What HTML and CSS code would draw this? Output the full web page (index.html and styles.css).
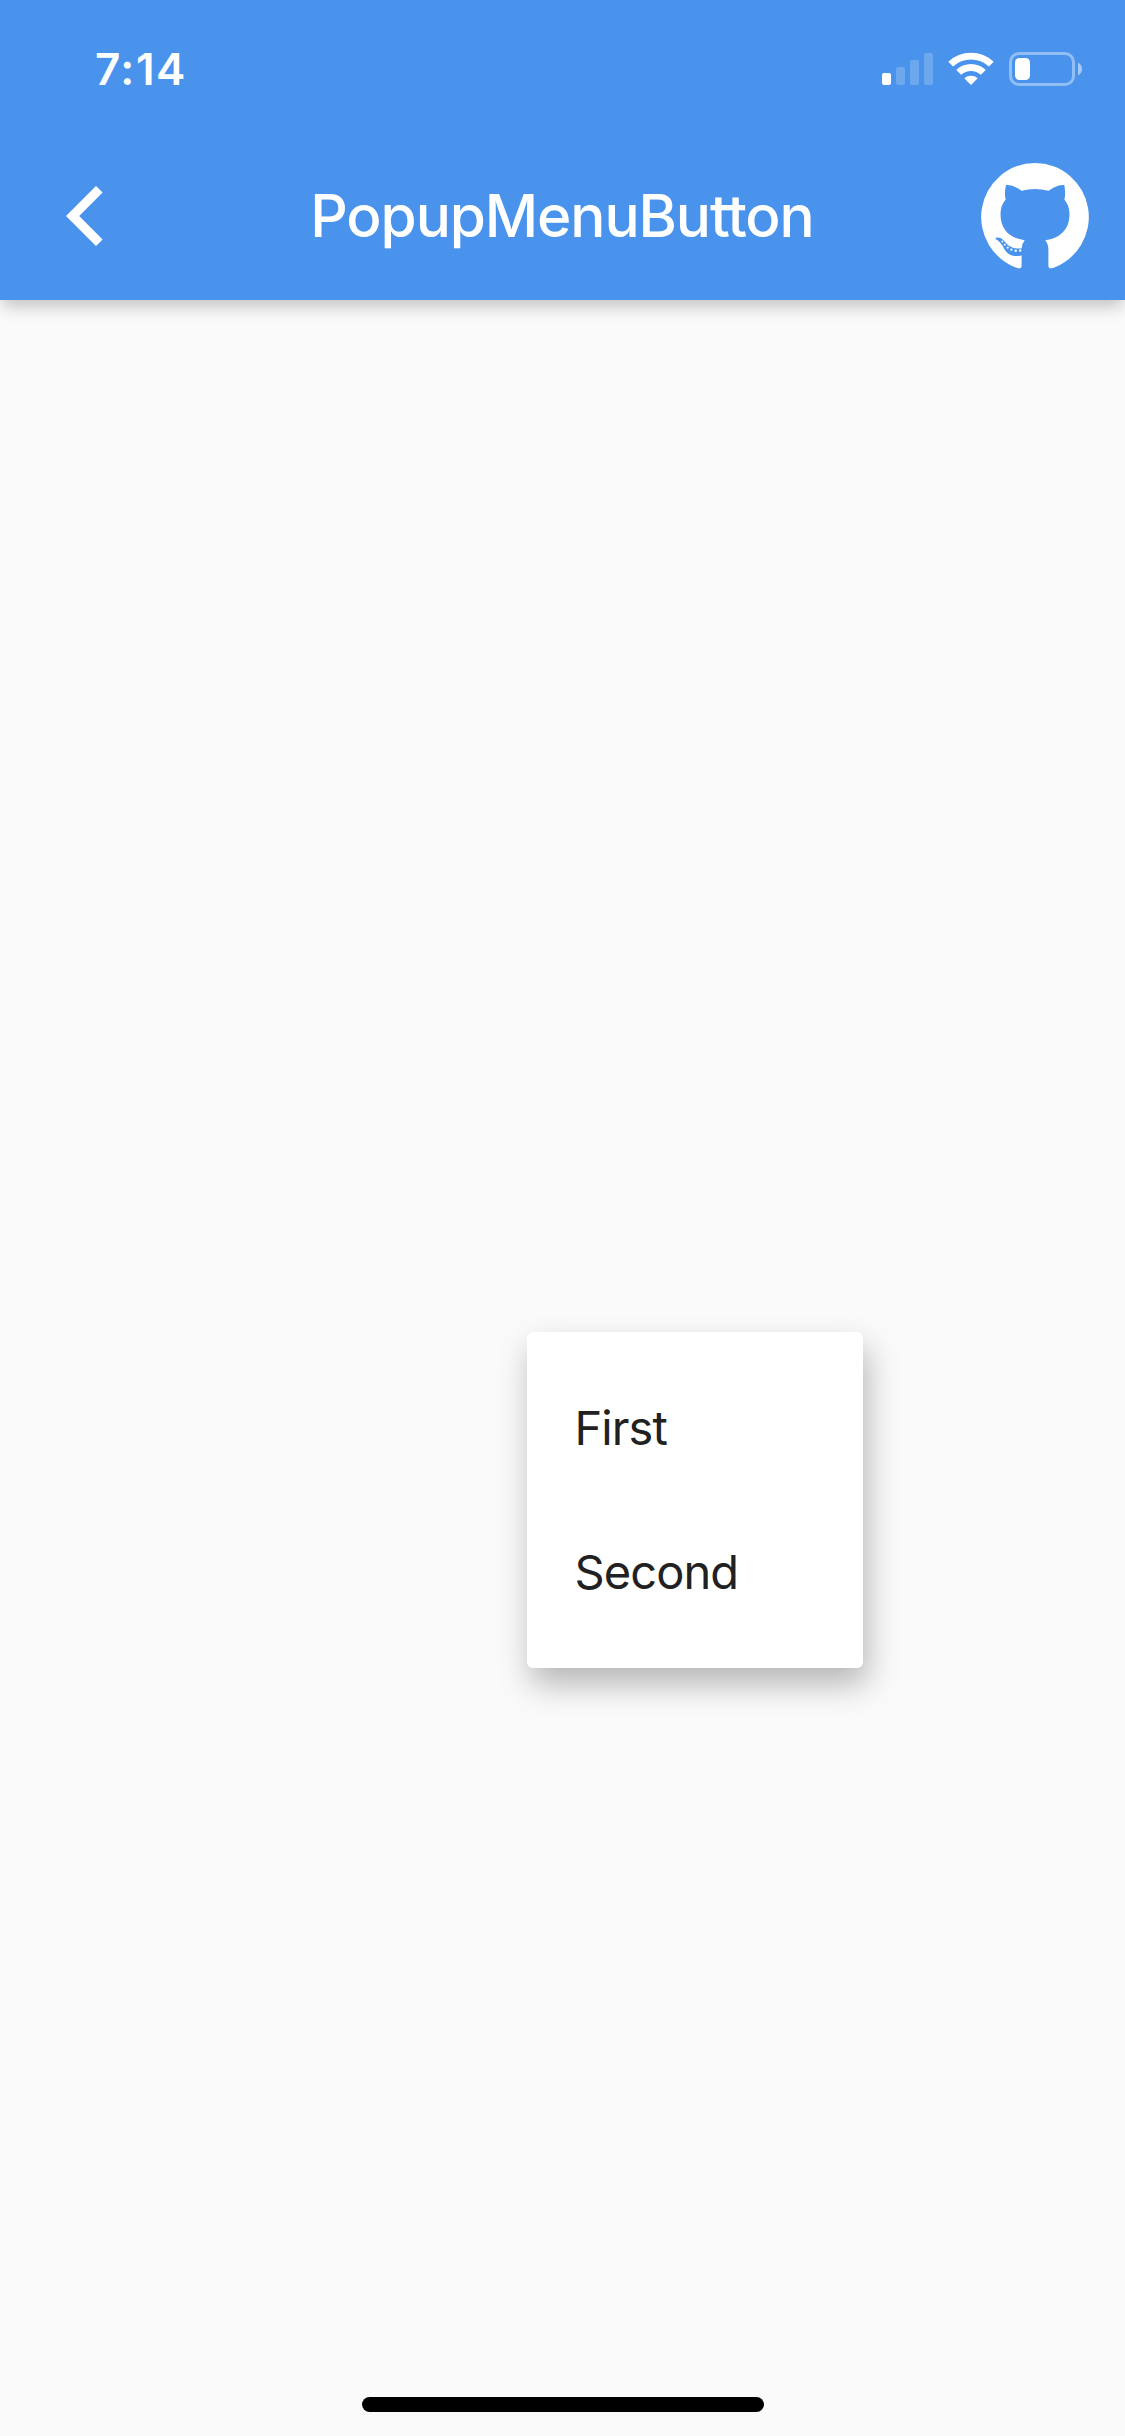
FILE: index.html
```html
<!DOCTYPE html>
<html lang="en">
<head>
<meta charset="utf-8">
<title>PopupMenuButton</title>
<link rel="stylesheet" href="styles.css">
</head>
<body>
<div class="screen">
  <header class="app-bar">
    <div class="status-bar">
      <span class="clock">7:14</span>
      <svg class="status-icons" width="204" height="36" viewBox="880 51 204 36" fill="#fff">
        <rect x="882" y="73" width="9" height="12" rx="2"/>
        <g opacity=".2">
          <rect x="896" y="67" width="9" height="18" rx="2"/>
          <rect x="910" y="60" width="9" height="25" rx="2"/>
          <rect x="924" y="53" width="9" height="32" rx="2"/>
        </g>
        <path d="M948.3 61.7a33 33 0 0 1 45.4 0l-4.7 4.8a26.3 26.3 0 0 0-36 0z"/>
        <path d="M956.3 69.9a21.4 21.4 0 0 1 29.4 0l-4.8 4.8a14.8 14.8 0 0 0-19.8 0z"/>
        <path d="M964.3 78.2a10.3 10.3 0 0 1 13.4 0L971 85z"/>
        <rect x="1010.5" y="53.5" width="63" height="31" rx="8.5" fill="none" stroke="#fff" stroke-width="3" opacity=".4"/>
        <rect x="1015" y="58" width="15" height="22" rx="4.5"/>
        <path d="M1078 62.5q4 2.4 4 6.5t-4 6.5z" opacity=".5"/>
      </svg>
    </div>
    <div class="toolbar">
      <svg class="back" width="37" height="60" viewBox="66 186 37 60" fill="#fff">
        <path d="M96 186l6.6 6.5L79.2 216l23.4 23.5L96 246 66 216z"/>
      </svg>
      <h1 class="title">PopupMenuButton</h1>
      <svg class="github" width="108" height="106" viewBox="981 163 108 106" fill="#fff">
        <path d="M1035 163A54 54 0 0 1 1052 268.200Q1048.400 269 1048.400 265.500V250Q1048.400 244 1045.300 240.300C1060 238 1069.500 230 1069.500 214C1069.500 208 1067.500 203 1064.300 199.500Q1066 194 1064.300 185Q1057 184.500 1048.700 190.700Q1035 187.300 1021.500 190.700Q1013 184.500 1006 185Q1004 194 1005.700 199.500C1002.500 203 1000.500 208 1000.500 214C1000.500 230 1010 238 1024.700 240.300Q1022.200 243 1021.700 248.300Q1013.500 249.300 1008.500 245.500Q1006 243.500 1003.800 240.500Q1000.500 236.500 996 237.700Q994.500 238.800 997.500 240.300Q1000.500 242 1004 248.500C1008 255.500 1013 257 1021.600 255.500V265.500Q1021.600 269 1018 268.200A54 54 0 0 1 1035 163Z"/>
        <circle cx="1002.300" cy="241.500" r=".9"/>
        <circle cx="1004.700" cy="244.700" r="1"/>
        <circle cx="1007.700" cy="247.600" r="1.100"/>
        <circle cx="1011.400" cy="249.700" r="1.100"/>
        <circle cx="1015.700" cy="250.800" r="1.200"/>
        <circle cx="1020.200" cy="250.500" r="1.200"/>
      </svg>
    </div>
  </header>
  <main class="content">
    <ul class="menu">
      <li class="menu-item">First</li>
      <li class="menu-item">Second</li>
    </ul>
  </main>
  <div class="home-indicator"></div>
</div>
</body>
</html>
```
FILE: styles.css
```css
* { box-sizing: border-box; }
body { margin: 0; font-family: Inter, "Liberation Sans", sans-serif; }
.screen {
  display: flex; flex-direction: column; align-items: center;
  width: 1125px; height: 2436px; background: #fafafa; overflow: hidden;
}
.app-bar {
  width: 100%; height: 300px; background: #4993ec; color: #fff;
  box-shadow: 0 8px 16px -2px rgba(0, 0, 0, .23);
}
.status-bar {
  display: flex; justify-content: space-between; align-items: center;
  height: 132px; padding: 6px 41px 0 95px;
}
.clock { font-size: 44px; font-weight: 600; line-height: 60px; letter-spacing: 1.5px; }
.toolbar {
  display: grid; grid-template-columns: 1fr auto 1fr; align-items: center;
  height: 168px; padding: 0 37px 0 36px;
}
.title {
  margin: 0; font-size: 58.5px; font-weight: 500;
  line-height: 70px; letter-spacing: -1.1px; white-space: nowrap;
}
.back, .github, .status-icons { display: block; flex: none; }
.back { margin-left: 30px; }
.github { justify-self: end; margin-right: -1px; }
.content { flex: 1; width: 100%; padding: 1032px 0 0 526.5px; }
.menu {
  width: 336px; height: 336px; margin: 0; padding: 24px 0; list-style: none;
  background: #fff; border-radius: 6px;
  box-shadow: 4px 16px 32px rgba(0, 0, 0, .28);
}
.menu-item {
  height: 144px; padding-left: 48px; color: #212121;
  font-size: 47px; line-height: 143px; letter-spacing: -.9px;
}
.home-indicator { width: 402px; height: 15px; margin-bottom: 24px; border-radius: 8px; background: #000; }
```
